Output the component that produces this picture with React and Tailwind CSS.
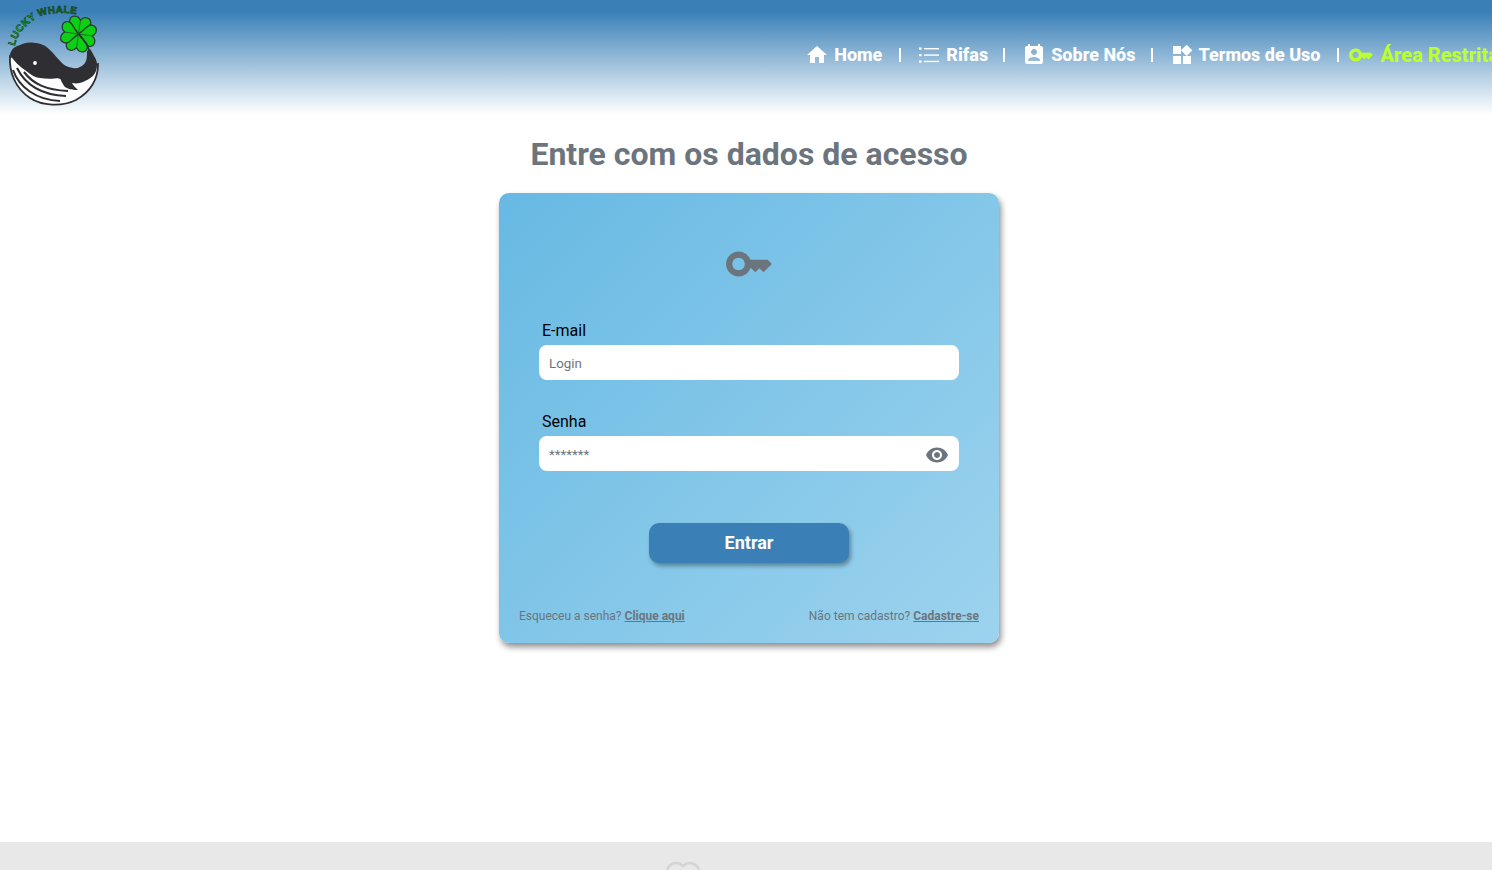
import React from "react";
import { MdHome, MdPermContactCalendar, MdWidgets, MdKey, MdVisibility } from "react-icons/md";

const ListIcon = () => (
  <svg width="22" height="22" viewBox="0 0 22 22" fill="none" className="shrink-0">
    <g fill="white">
      <rect x="1" y="3.5" width="2.6" height="2.2" />
      <rect x="1" y="10" width="2.6" height="2.2" />
      <rect x="1" y="16.5" width="2.6" height="2.2" />
      <rect x="6" y="4" width="15" height="1.4" />
      <rect x="6" y="10.4" width="15" height="1.4" />
      <rect x="6" y="16.8" width="15" height="1.4" />
    </g>
  </svg>
);

const leaf = "M0 0 C -4 -6,-13 -8,-11.5 -14 C -10.5 -20,-3 -20,0 -15 C 3 -20,10.5 -20,11.5 -14 C 13 -8,4 -6,0 0 Z";

const Logo = () => (
  <svg width="100" height="108" viewBox="0 0 100 108" className="block">
    <defs>
      <path id="arc" d="M15 46 C 17 33, 29 21, 41 16 C 52 12, 66 12, 80 15" />
    </defs>
    <text fontFamily="'Liberation Sans', sans-serif" fontWeight="700" fontSize="10" stroke="#14401c" strokeWidth="0.6" textLength="77">
      <textPath href="#arc">
        <tspan fill="#12b520">LUCKY </tspan>
        <tspan fill="#1f6b2c">WHALE</tspan>
      </textPath>
    </text>
    {/* belly */}
    <path d="M10 56 C 9 72, 15 88, 30 98 C 42 106, 62 107, 76 100 C 90 92, 98 80, 98 64 L 60 78 Z" fill="#fff" stroke="#2f2f33" strokeWidth="1.8" />
    <path d="M13 70 C 19 87, 36 100, 60 101 M17 68 C 25 84, 40 95, 66 96 M24 72 C 33 84, 46 90, 68 91" fill="none" stroke="#2f2f33" strokeWidth="2.1" />
    {/* body */}
    <path d="M10 55 C 15 62, 19 66, 25 70 C 31 75, 36 78, 40 78 C 46 79, 52 79, 60 78 C 62 83, 64 86, 65 87 C 70 90, 74 90, 78 90 C 75 87, 73 85, 72 83 C 77 84, 80 83, 83 82 C 90 79, 94 76, 96 71 C 98 65, 97 60, 94 56 C 92 52, 91 50, 90 49 L 87 51 C 87 56, 87 60, 85 63 C 82 67, 77 69, 73 68 C 68 67, 65 66, 62 63 C 58 59, 55 55, 50 50 C 45 45, 40 43, 35 43 C 29 42, 24 43, 20 45 C 16 46, 13 48, 12 50 C 11 52, 10 53, 10 55 Z" fill="#2f2f33" />
    <circle cx="35" cy="63" r="1.9" fill="#fff" />
    {/* clover */}
    <g transform="translate(78.5 34) scale(0.92)" stroke="#2d3a33" strokeWidth="1.4" fill="#0bd014">
      <path d={leaf} transform="rotate(8)" />
      <path d={leaf} transform="rotate(98)" />
      <path d={leaf} transform="rotate(188)" />
      <path d={leaf} transform="rotate(278)" />
      <path d="M0 0 L 2 -14 M0 0 L 14 2 M0 0 L -2 14 M0 0 L -14 -2" fill="none" strokeWidth="0.9" stroke="#1c5a22" />
    </g>
    <path d="M79 34 C 84 40, 88 45, 89 50" stroke="#2f2f33" strokeWidth="1.6" fill="none" />
  </svg>
);

const Sep = ({ className }) => <span className={`w-[2px] h-[14px] bg-white shrink-0 ${className}`} />;

export default function App() {
  return (
    <div className="w-[1492px] h-[870px] overflow-hidden bg-white font-['Roboto',sans-serif]">
      <div className="w-[1498px]">
        <header className="h-[115px] flex items-start bg-[linear-gradient(to_bottom,#3a80b7_0%,#3a80b7_10%,#ffffff_100%)]">
          <div className="shrink-0"><Logo /></div>
          <nav className="ml-auto -mr-[1px] mt-[44px] h-[22px] flex items-center text-[18px] leading-[22px] font-extrabold text-white whitespace-nowrap">
            <a className="flex items-center gap-[5px]"><MdHome size={24} />Home</a>
            <Sep className="ml-[17px] mr-[17px]" />
            <a className="flex items-center gap-[6px]"><ListIcon />Rifas</a>
            <Sep className="ml-[15px] mr-[17px]" />
            <a className="flex items-center gap-[5px]"><MdPermContactCalendar size={24} />Sobre Nós</a>
            <Sep className="ml-[16px] mr-[17px]" />
            <a className="flex items-center gap-[4px]"><MdWidgets size={24} />Termos de Uso</a>
            <Sep className="ml-[16px] mr-[9px]" />
            <a className="flex items-center gap-[7px] text-[20px] text-[#bcff2f]"><MdKey size={26} />Área Restrita</a>
          </nav>
        </header>

        <main className="h-[727px] pt-[20px]">
          <h1 className="text-center text-[32px] leading-[38px] font-bold text-[#6c757d]">Entre com os dados de acesso</h1>
          <div className="mt-[20px] mx-auto w-[500px] h-[450px] rounded-[10px] bg-[linear-gradient(135deg,#67b9e3_0%,#9dd3ee_100%)] shadow-[2px_4px_6px_rgba(0,0,0,0.45)] pt-[46px] px-[20px]">
            <div className="flex justify-center text-[#6c757d]"><MdKey size={50} /></div>
            <form className="mt-[32px] px-[20px]">
              <label className="block pl-[3px] text-[16px] leading-[19px] text-black">E-mail</label>
              <input placeholder="Login" className="block w-full mt-[5px] h-[35px] rounded-[8px] bg-white px-[10px] pt-[2px] outline-none font-['Roboto',sans-serif] text-[13.33px] placeholder:text-[#6c757d] placeholder:opacity-100" />
              <label className="mt-[32px] block pl-[3px] text-[16px] leading-[19px] text-black">Senha</label>
              <div className="relative mt-[5px]">
                <input placeholder="*******" className="block w-full h-[35px] rounded-[8px] bg-white pl-[10px] pr-[44px] pt-[2px] outline-none font-['Roboto',sans-serif] text-[13.33px] placeholder:text-[#6c757d] placeholder:opacity-100" />
                <MdVisibility size={24} className="absolute right-[10px] top-[7px] text-[#6c757d]" />
              </div>
              <div className="mt-[52px] flex justify-center">
                <button type="button" className="w-[200px] h-[40px] pb-[2px] rounded-[10px] bg-[#3a80b7] text-white text-[18px] font-bold shadow-[2px_3px_4px_rgba(0,0,0,0.35)]">Entrar</button>
              </div>
            </form>
            <div className="mt-[46px] flex justify-between text-[12px] leading-[14px] text-[#6c757d]">
              <span>Esqueceu a senha? <a className="font-bold underline">Clique aqui</a></span>
              <span>Não tem cadastro? <a className="font-bold underline">Cadastre-se</a></span>
            </div>
          </div>
        </main>

        <footer className="h-[28px] bg-[#e8e8e8] overflow-hidden pl-[664px] pt-[19px]">
          <svg width="38" height="34" viewBox="0 0 38 34" fill="none" stroke="#d4d4d4" strokeWidth="2.5">
            <path d="M19 32 C 8 24, 3 17, 3 11 C 3 5, 8 2, 12 2 C 15 2, 17 3, 19 5 C 21 3, 23 2, 26 2 C 30 2, 35 5, 35 11 C 35 17, 30 24, 19 32 Z" />
          </svg>
        </footer>
      </div>
    </div>
  );
}
